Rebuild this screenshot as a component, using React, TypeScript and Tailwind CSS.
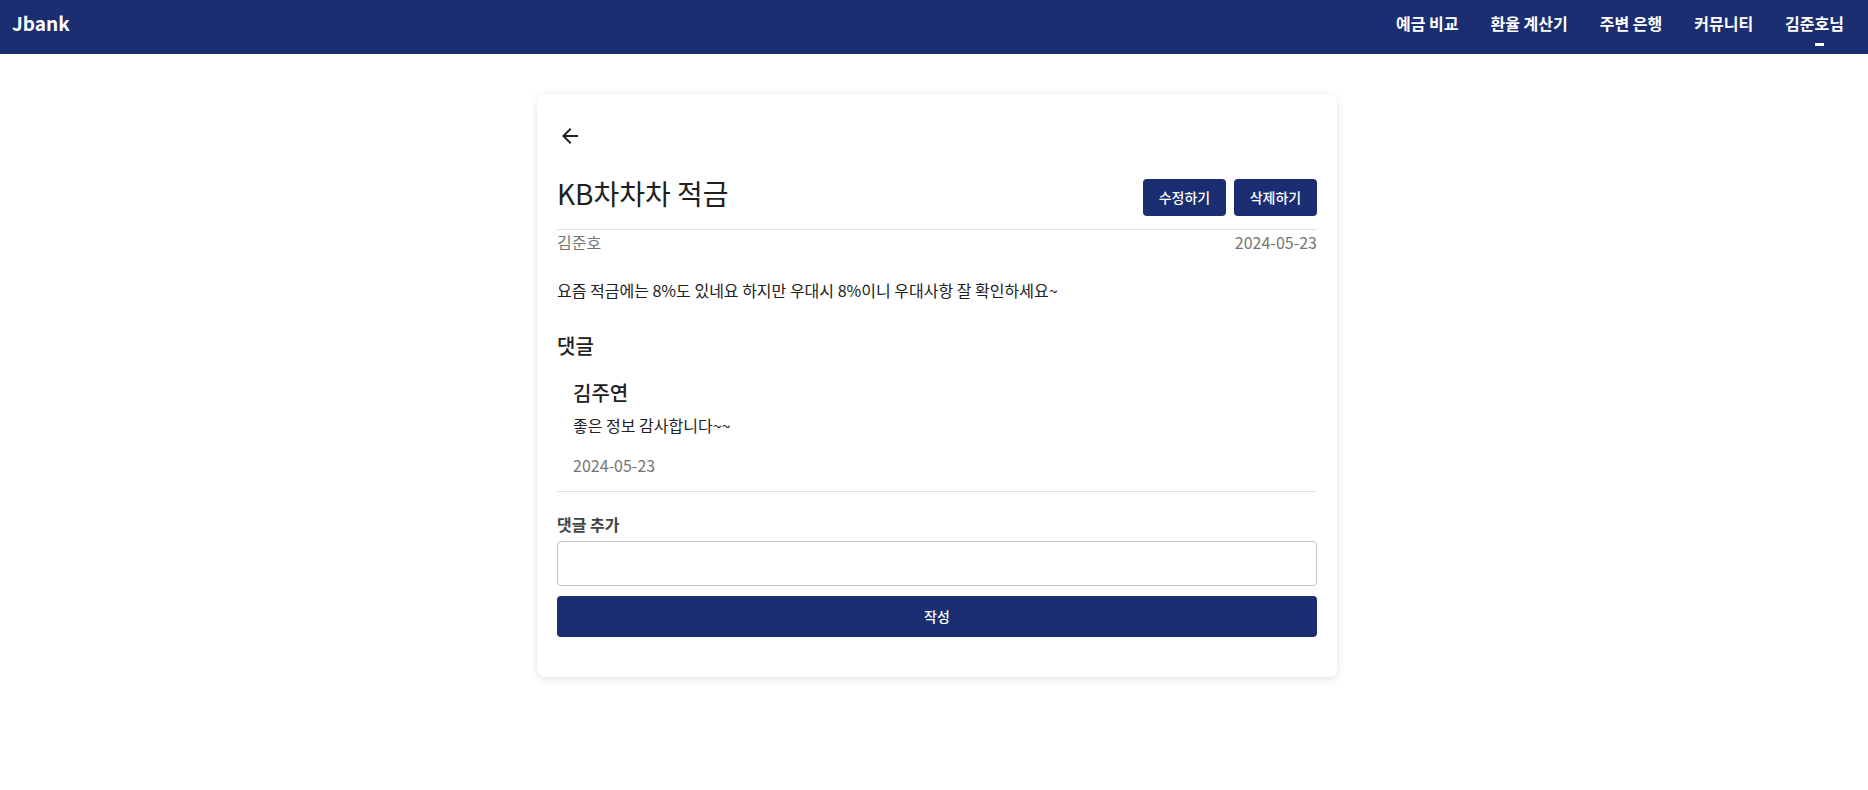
import React from "react";

const NAVY = "bg-[#1b2e72]";

export default function App() {
  const font = { fontFamily: '"Noto Sans CJK KR", "Noto Sans", sans-serif' };
  return (
    <div className="min-h-[790px] bg-white text-[#212121]" style={font}>
      <header className={`${NAVY} h-[54px] flex items-start justify-between pt-[9px] pl-[12px] pr-6`}>
        <div className="text-white text-[19px] font-bold leading-7">Jbank</div>
        <nav className="flex gap-8 pt-[2px] text-white text-[16px] font-bold leading-6">
          <span>예금 비교</span>
          <span>환율 계산기</span>
          <span>주변 은행</span>
          <span>커뮤니티</span>
          <span className="flex flex-col items-center">
            김준호님
            <span className="mt-2 ml-[10px] w-[9px] h-[3px] bg-white" />
          </span>
        </nav>
      </header>

      <main className="flex justify-center pt-10 pl-[6px]">
        <div className="w-[800px] rounded-lg bg-white shadow-[0_2px_8px_rgba(0,0,0,0.12)] px-5 pt-[30px] pb-[40px]">
          <svg width="24" height="24" viewBox="0 0 24 24" className="ml-[1px] fill-[#212121]">
            <path d="M20 11H7.83l5.59-5.59L12 4l-8 8 8 8 1.41-1.41L7.83 13H20z" />
          </svg>

          <div className="mt-[31px] flex items-center justify-between pb-[13px] border-b border-[#e0e0e0]">
            <h1 className="text-[28px] leading-[37px] font-normal text-[#1f1f1f] -mt-[9px]">KB차차차 적금</h1>
            <div className="flex gap-2">
              <button className={`${NAVY} h-[37px] w-[83px] rounded text-white text-[14px] font-medium`}>수정하기</button>
              <button className={`${NAVY} h-[37px] w-[83px] rounded text-white text-[14px] font-medium`}>삭제하기</button>
            </div>
          </div>

          <div className="flex justify-between text-[16px] leading-6 text-[#757575]">
            <span>김준호</span>
            <span>2024-05-23</span>
          </div>

          <p className="mt-[24px] text-[16px] leading-6 text-[#212121]">
            요즘 적금에는 8%도 있네요 하지만 우대시 8%이니 우대사항 잘 확인하세요~
          </p>

          <h2 className="mt-[30px] text-[20px] leading-7 font-medium">댓글</h2>

          <div className="mt-[19px] pl-4 pb-[14px] border-b border-[#e0e0e0]">
            <div className="text-[20px] leading-7 font-medium">김주연</div>
            <div className="mt-[6px] text-[16px] leading-6">좋은 정보 감사합니다~~</div>
            <div className="mt-4 text-[16px] leading-6 text-[#757575]">2024-05-23</div>
          </div>

          <div className="mt-[20px] text-[16px] leading-6 font-bold text-[#444]">댓글 추가</div>
          <input
            className="mt-[5px] block w-full h-[45px] rounded border border-[#c4c4c4] px-3 outline-none"
            style={font}
          />
          <button className={`${NAVY} mt-[10px] w-full h-[41px] rounded text-white text-[14px] font-medium`}>
            작성
          </button>
        </div>
      </main>
    </div>
  );
}
